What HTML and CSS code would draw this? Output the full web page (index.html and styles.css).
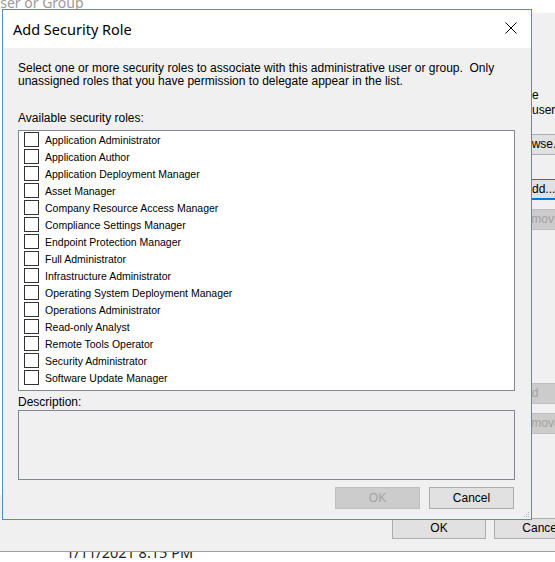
FILE: index.html
```html
<!DOCTYPE html>
<html>
<head>
<meta charset="utf-8">
<link rel="stylesheet" href="styles.css">
</head>
<body>
<div class="screen">
  <div class="bg-top"><span class="bg-title">User or Group</span></div>
  <div class="bg-main">
    <div class="bg-left"></div>
    <div class="bg-content">
      <div class="bg-side">
        <div class="bg-label">e<br>user</div>
        <div class="bg-btn btn-browse">Browse...</div>
        <div class="bg-btn btn-add focus">Add...</div>
        <div class="bg-btn btn-remove disabled">Remove</div>
        <div class="bg-btn btn-add2 disabled">Add</div>
        <div class="bg-btn btn-remove2 disabled">Remove</div>
      </div>
      <div class="bg-footer">
        <div class="bg-fbtn">OK</div>
        <div class="bg-fbtn">Cancel</div>
      </div>
    </div>
  </div>
  <div class="bg-list"><span class="bg-date">1/11/2021 8:15 PM</span></div>

  <div class="dialog">
    <div class="titlebar">
      <span class="title">Add Security Role</span>
      <svg class="close" width="12" height="12" viewBox="0 0 12 12"><path d="M0.5 0.5 L11.5 11.5 M11.5 0.5 L0.5 11.5" stroke="#000" stroke-width="1" fill="none"/></svg>
    </div>
    <div class="dbody">
      <p class="intro">Select one or more security roles to associate with this administrative user or group.&nbsp; Only unassigned roles that you have permission to delegate appear in the list.</p>
      <div class="label lbl-roles">Available security roles:</div>
      <div class="listbox">
        <div class="row"><span class="cb"></span><span>Application Administrator</span></div>
        <div class="row"><span class="cb"></span><span>Application Author</span></div>
        <div class="row"><span class="cb"></span><span>Application Deployment Manager</span></div>
        <div class="row"><span class="cb"></span><span>Asset Manager</span></div>
        <div class="row"><span class="cb"></span><span>Company Resource Access Manager</span></div>
        <div class="row"><span class="cb"></span><span>Compliance Settings Manager</span></div>
        <div class="row"><span class="cb"></span><span>Endpoint Protection Manager</span></div>
        <div class="row"><span class="cb"></span><span>Full Administrator</span></div>
        <div class="row"><span class="cb"></span><span>Infrastructure Administrator</span></div>
        <div class="row"><span class="cb"></span><span>Operating System Deployment Manager</span></div>
        <div class="row"><span class="cb"></span><span>Operations Administrator</span></div>
        <div class="row"><span class="cb"></span><span>Read-only Analyst</span></div>
        <div class="row"><span class="cb"></span><span>Remote Tools Operator</span></div>
        <div class="row"><span class="cb"></span><span>Security Administrator</span></div>
        <div class="row"><span class="cb"></span><span>Software Update Manager</span></div>
      </div>
      <div class="label lbl-desc">Description:</div>
      <div class="descbox"></div>
      <div class="buttons">
        <div class="btn disabled">OK</div>
        <div class="btn">Cancel</div>
      </div>
    </div>
    <svg class="grip" width="6" height="6" viewBox="0 0 6 6"><rect x="4" y="0" width="1" height="1" fill="#b8b8b8"/><rect x="2" y="2" width="1" height="1" fill="#b8b8b8"/><rect x="4" y="2" width="1" height="1" fill="#b8b8b8"/><rect x="0" y="4" width="1" height="1" fill="#b8b8b8"/><rect x="2" y="4" width="1" height="1" fill="#b8b8b8"/><rect x="4" y="4" width="1" height="1" fill="#b8b8b8"/></svg>
  </div>
</div>
</body>
</html>
```

FILE: styles.css
```css
* { box-sizing: border-box; }
html, body { margin: 0; padding: 0; }
body {
  width: 555px;
  height: 562px;
  overflow: hidden;
  background: #f0f0f0;
  font-family: "Liberation Sans", Arial, sans-serif;
  font-size: 12px;
  color: #000;
}
.screen {
  position: relative;
  width: 555px;
  height: 562px;
  overflow: hidden;
  display: flex;
  flex-direction: column;
}
.bg-top {
  height: 13px;
  background: #fff;
  overflow: hidden;
  flex: none;
}
.bg-title {
  display: block;
  margin-top: -7px;
  margin-left: -10px;
  font-family: "Noto Sans", "Liberation Sans", sans-serif;
  font-size: 14px;
  line-height: 19px;
  color: #9a9a9a;
  white-space: nowrap;
}
.bg-main {
  height: 539px;
  flex: none;
  display: flex;
  background: #f0f0f0;
  border-bottom: 1px solid #a0a0a0;
}
.bg-left {
  width: 2px;
  height: 482px;
  background: #fff;
  flex: none;
}
.bg-content {
  flex: 1;
  display: flex;
  flex-direction: column;
}
.bg-side {
  padding-left: 530px;
  display: flex;
  flex-direction: column;
  align-items: flex-start;
}
.bg-label {
  margin-top: 75px;
  line-height: 15px;
  white-space: nowrap;
}
.bg-btn {
  margin-left: -40px;
  width: 120px;
  height: 21px;
  line-height: 19px;
  background: #e1e1e1;
  border: 1px solid #adadad;
  white-space: nowrap;
}
.bg-btn.disabled {
  background: #cccccc;
  border-color: #bfbfbf;
  color: #a3a3a3;
}
.bg-btn.focus {
  border-color: #0078d7;
  box-shadow: inset 0 -1px 0 #0078d7;
}
.btn-browse { margin-top: 16px; padding-left: 20px; }
.btn-add { margin-top: 24px; padding-left: 31px; }
.btn-remove { margin-top: 9px; padding-left: 23px; }
.btn-add2 { margin-top: 153px; padding-left: 24px; }
.btn-remove2 { margin-top: 9px; padding-left: 23px; }
.bg-footer {
  margin-top: 84px;
  margin-left: 390px;
  display: flex;
  gap: 8px;
}
.bg-fbtn {
  width: 94px;
  height: 21px;
  line-height: 19px;
  text-align: center;
  background: #e1e1e1;
  border: 1px solid #adadad;
  flex: none;
}
.bg-list {
  flex: 1;
  background: #fff;
  overflow: hidden;
}
.bg-date {
  display: block;
  margin-top: -9px;
  margin-left: 66px;
  font-family: "Noto Sans", "Liberation Sans", sans-serif;
  font-size: 14.5px;
  line-height: 18px;
  color: #222;
}

/* dialog */
.dialog {
  position: absolute;
  left: 2px;
  top: 9px;
  width: 530px;
  height: 511px;
  border: 1px solid #4a90cf;
  background: #f0f0f0;
  display: flex;
  flex-direction: column;
}
.titlebar {
  height: 38px;
  flex: none;
  background: #fff;
  display: flex;
  align-items: center;
  justify-content: space-between;
  padding: 0 14px 0 10px;
}
.title {
  font-family: "Noto Sans", "Liberation Sans", sans-serif;
  font-size: 14.5px;
  color: #000;
  margin-top: -1px;
}
.close { display: block; margin-top: -2px; }
.dbody {
  flex: 1;
  padding: 14px 16px 0 15px;
  display: flex;
  flex-direction: column;
}
.intro {
  margin: 0;
  line-height: 13px;
  font-size: 12px;
}
.label {
  line-height: 13px;
  font-size: 12px;
}
.lbl-roles { margin-top: 24px; }
.listbox {
  margin-top: 5px;
  height: 261px;
  background: #fff;
  border: 1px solid #828790;
  padding: 0 0 4px 5px;
}
.row {
  height: 17px;
  display: flex;
  align-items: center;
  gap: 6px;
  font-size: 10.5px;
  white-space: nowrap;
}
.cb {
  width: 15px;
  height: 15px;
  border: 1px solid #333;
  background: #fff;
  flex: none;
}
.lbl-desc { margin-top: 5px; }
.descbox {
  margin-top: 1px;
  height: 70px;
  border: 1px solid #828790;
  background: #f0f0f0;
}
.buttons {
  margin-top: 7px;
  display: flex;
  justify-content: flex-end;
  gap: 9px;
  padding-right: 1px;
}
.btn {
  width: 85px;
  height: 22px;
  line-height: 20px;
  text-align: center;
  background: #e1e1e1;
  border: 1px solid #adadad;
}
.btn.disabled {
  background: #cccccc;
  border-color: #bfbfbf;
  color: #a3a3a3;
}
.grip {
  position: absolute;
  right: 1px;
  bottom: 1px;
}
```
